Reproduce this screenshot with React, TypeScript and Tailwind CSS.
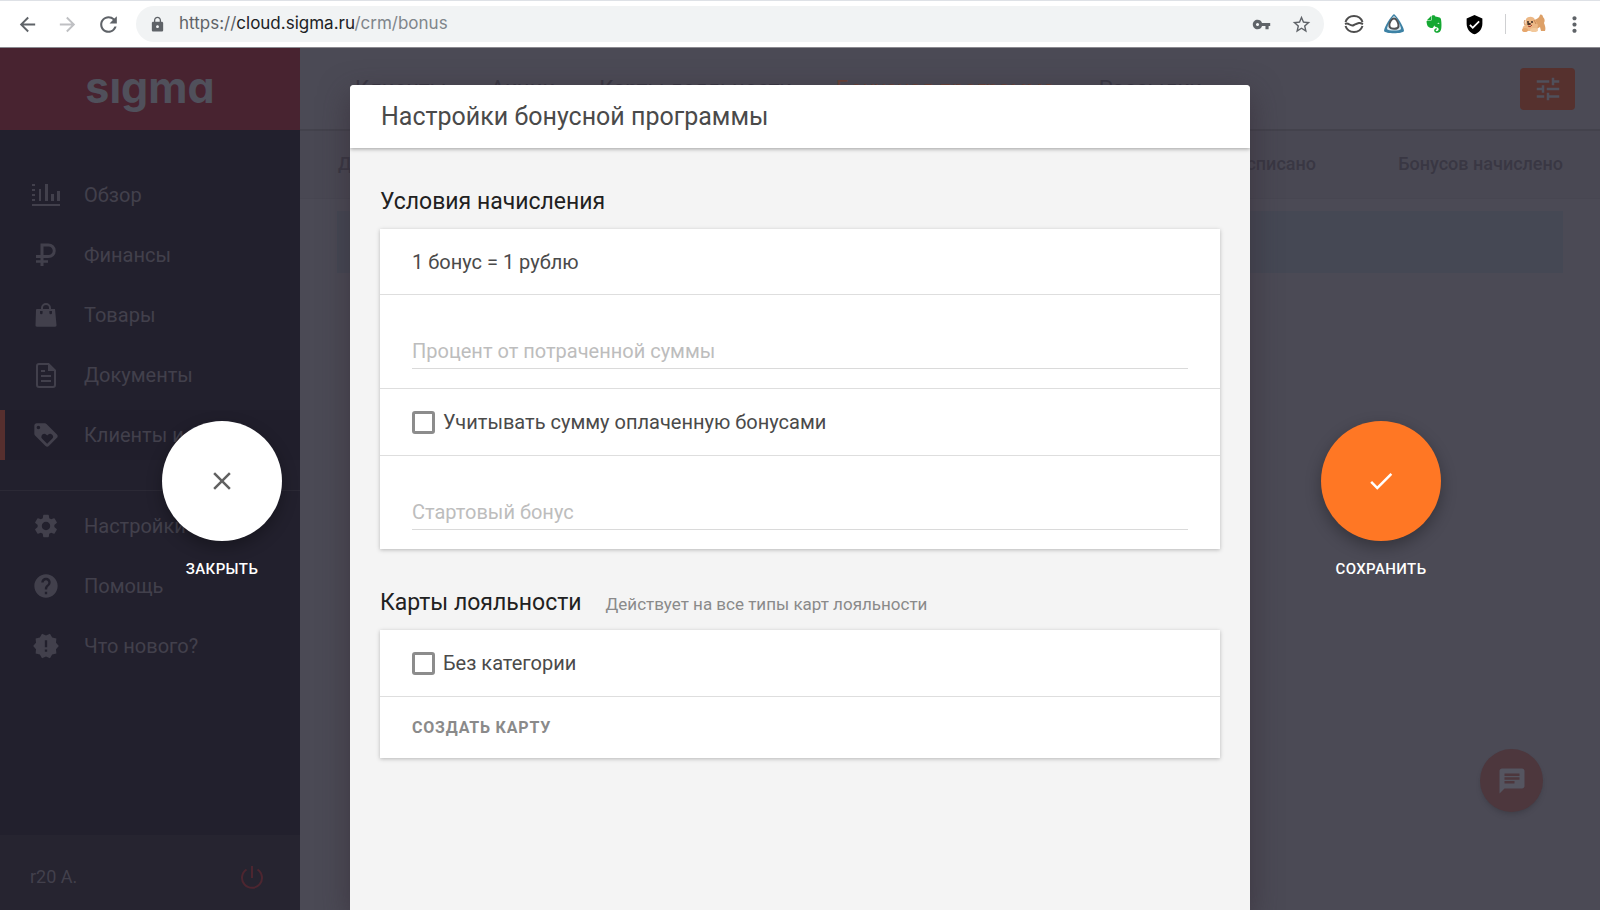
import { FC, ReactNode } from "react";
import { FaEvernote } from "react-icons/fa";
import {
    MdArrowBack,
    MdArrowForward,
    MdChat,
    MdCheck,
    MdClose,
    MdHelp,
    MdLock,
    MdLoyalty,
    MdMoreVert,
    MdNewReleases,
    MdRefresh,
    MdSettings,
    MdStarBorder,
    MdTune,
    MdVerifiedUser,
    MdVpnKey,
} from "react-icons/md";

const OverviewIcon: FC = () => (
    <svg width="28" height="24" viewBox="0 0 28 24" fill="currentColor">
        <path d="M0 21h28v2H0z" />
        <path d="M0 1h3v2H0zM0 6h3v2H0zM0 11h3v2H0zM0 16h3v2H0z" />
        <path d="M7 6h2v12H7zM13 1h3v17h-3zM19 11h3v7h-3zM25 8h3v10h-3z" />
    </svg>
);

const RubleIcon: FC = () => (
    <svg width="20" height="24" viewBox="0 0 20 24" fill="none" stroke="currentColor">
        <path d="M6 23V2h6.500a5.500 5.500 0 0 1 0 11.500H0" strokeWidth="3" />
        <path d="M0 18.500h12" strokeWidth="2.500" />
    </svg>
);

const BagIcon: FC = () => (
    <svg width="22" height="24" viewBox="0 0 22 24" fill="currentColor">
        <path d="M2 6h4V5a5 5 0 0 1 10 0v1h4l1.500 16a1.500 1.500 0 0 1-1.500 1.800H2A1.500 1.500 0 0 1 .5 22L1 7a1 1 0 0 1 1-1zm6 0h6V5a3 3 0 0 0-6 0zM5 8v2a1.300 1.300 0 0 0 2.600 0V8zm9.400 0v2a1.300 1.300 0 0 0 2.600 0V8z" fillRule="evenodd" />
    </svg>
);

const DocumentIcon: FC = () => (
    <svg width="20" height="25" viewBox="0 0 20 25" fill="none" stroke="currentColor" strokeWidth="2">
        <path d="M3 1h9.500L19 7.500V22a2 2 0 0 1-2 2H3a2 2 0 0 1-2-2V3a2 2 0 0 1 2-2z" />
        <path d="M12 1v7h7z" fill="currentColor" stroke="none" />
        <path d="M5 8h4M5 13h10M5 18h10" />
    </svg>
);

const PowerIcon: FC = () => (
    <svg width="24" height="24" viewBox="0 0 24 24" fill="none" stroke="currentColor" strokeWidth="2">
        <path d="M12 1v12" />
        <path d="M17.500 4.500a10 10 0 1 1-11 0" />
    </svg>
);

const PuppyIcon: FC = () => (
    <svg width="24" height="20" viewBox="0 0 24 20">
        <path d="M12 6c3-1 5-2 6-5 1-1 3 0 3 2 2 2 2 4 1 6 1 3 2 5 1 8h-4l-1-4-5 3z" fill="#dda067" />
        <path d="M4 5c2-3 8-3 9 1l3 5-1 6H5l-4-2c-1-2 1-3 2-4z" fill="#ecb886" />
        <ellipse cx="3" cy="16" rx="3" ry="2" fill="#e6a66c" />
        <ellipse cx="12" cy="16" rx="4" ry="2" fill="#f2c89b" />
        <path d="M3 6c-1 2-1 3 0 5M12 6l2 4" stroke="#c98550" fill="none" />
        <circle cx="6" cy="8" r="1" fill="#3b2a22" />
        <circle cx="10" cy="8" r="1" fill="#3b2a22" />
        <ellipse cx="7" cy="10" rx="2" ry="1" fill="#3b2a22" />
        <path d="M6 12q2 2 4-1" stroke="#a63b2c" fill="none" />
    </svg>
);

const BrowserBar: FC = () => (
    <div className="h-12 shrink-0 flex items-center pl-4 pr-[13px] bg-white text-[#5f6368] border-t border-t-[#dee1e6] border-b border-b-[#8b8a90]">
        <button type="button" aria-label="Назад" className="w-6">
            <MdArrowBack size={23} />
        </button>
        <button type="button" aria-label="Вперёд" className="ml-4 w-6 text-[#bfc0c3]">
            <MdArrowForward size={23} />
        </button>
        <button type="button" aria-label="Обновить" className="ml-4 w-6">
            <MdRefresh size={25} />
        </button>
        <div className="ml-4 flex-1 h-9 flex items-center rounded-full bg-[#f1f3f4] pl-3 pr-3">
            <MdLock size={17} className="mx-px" />
            <p className="ml-3 font-['Inter',sans-serif] text-[17px] text-[#80868b]">
                <span className="text-[#5f6368]">https://</span>
                <span className="text-[#202124]">cloud.sigma.ru</span>/crm/bonus
            </p>
            <button type="button" aria-label="Пароли" className="ml-auto">
                <MdVpnKey size={19} />
            </button>
            <button type="button" aria-label="В закладки" className="ml-5">
                <MdStarBorder size={21} />
            </button>
        </div>
        <div className="ml-5 flex items-center gap-5">
            <svg width="20" height="20" viewBox="0 0 20 20" fill="none" stroke="#4d4d4d" strokeWidth="2">
                <path d="M1.500 8A9 9 0 0 1 18.500 8M1.500 12a9 9 0 0 0 17 0" />
                <path d="M1 10c4-2 5 3 9 1s5-3 9-1" />
            </svg>
            <svg width="20" height="20" viewBox="0 0 20 20" fill="none">
                <path d="M10 0C13 2 20 13 20 17c-1 3-19 3-20 0C0 13 7 2 10 0z" fill="#3d82a5" />
                <path d="M10 2c2 1 7 10 7 13-1 2-13 2-14 0C3 12 8 3 10 2z" fill="#dceaf0" />
                <path d="M10 4.500c2.500 0 5 5 4.500 8s-8 3-9 0 2-8 4.500-8z" fill="#fff" stroke="#4f5154" strokeWidth="2" />
            </svg>
            <FaEvernote size={20} className="text-[#14a832]" />
            <MdVerifiedUser size={21} className="text-black" />
        </div>
        <div className="ml-5 h-5 w-px bg-[#cfd0d2]" />
        <div className="ml-4">
            <PuppyIcon />
        </div>
        <button type="button" aria-label="Меню" className="ml-4">
            <MdMoreVert size={25} />
        </button>
    </div>
);

interface NavItemProps {
    icon: ReactNode;
    label: string;
    active?: boolean;
}

const NavItem: FC<NavItemProps> = ({ icon, label, active }) => (
    <li>
        <a
            href="#"
            className={
                active
                    ? "flex items-center h-[50px] pl-[27px] bg-[#201e2b] border-l-[5px] border-[#562f2e]"
                    : "flex items-center h-[50px] pl-8"
            }
        >
            <span className="w-7 flex justify-center">{icon}</span>
            <span className="ml-6 whitespace-nowrap">{label}</span>
        </a>
    </li>
);

const Sidebar: FC = () => (
    <aside className="w-[300px] shrink-0 flex flex-col bg-[#22202d] text-[#42404c]">
        <div className="h-[82px] flex items-center justify-center bg-[#482330]">
            <span className="font-['Inter',sans-serif] font-bold text-[43px] leading-none pb-1 text-[#50505b] [font-feature-settings:'cv11']">
                sıgma
            </span>
        </div>
        <nav className="text-xl">
            <ul className="mt-10 flex flex-col gap-[10px]">
                <NavItem icon={<OverviewIcon />} label="Обзор" />
                <NavItem icon={<RubleIcon />} label="Финансы" />
                <NavItem icon={<BagIcon />} label="Товары" />
                <NavItem icon={<DocumentIcon />} label="Документы" />
                <NavItem icon={<MdLoyalty size={28} />} label="Клиенты и CRM" active />
            </ul>
            <hr className="mt-[30px] border-[#2b2935]" />
            <ul className="mt-[10px] flex flex-col gap-[10px]">
                <NavItem icon={<MdSettings size={30} />} label="Настройки" />
                <NavItem icon={<MdHelp size={30} />} label="Помощь" />
                <NavItem icon={<MdNewReleases size={28} />} label="Что нового?" />
            </ul>
        </nav>
        <div className="mt-auto h-[75px] flex items-center justify-between pl-[30px] pr-9 pt-2 bg-[#262430] text-lg">
            <span>r20 А.</span>
            <button type="button" aria-label="Выйти" className="text-[#4d2630]">
                <PowerIcon />
            </button>
        </div>
    </aside>
);

const Dashboard: FC = () => (
    <main className="flex-1 min-w-0 flex flex-col bg-[#4b4a55]">
        <header className="h-[83px] shrink-0 flex items-center justify-between pl-[55px] pr-[25px] border-b-2 border-[#43424c]">
            <nav className="flex gap-11 text-[22px] text-[#393743] whitespace-nowrap">
                <a href="#">Клиенты</a>
                <a href="#">Акции</a>
                <a href="#">Карты лояльности</a>
                <a href="#" className="text-[#6b4236]">Бонусная программа</a>
                <a href="#">Рассылки</a>
            </nav>
            <button
                type="button"
                aria-label="Фильтры"
                className="w-[55px] h-[42px] flex items-center justify-center rounded bg-[#56312e] text-[#50505b]"
            >
                <MdTune size={30} />
            </button>
        </header>
        <table className="w-full text-lg text-[#393743]">
            <thead className="bg-[#494853]">
                <tr className="h-[67px] border-b border-[#474651]">
                    <th className="pl-[38px] text-left font-medium">Дата</th>
                    <th className="text-right font-medium">Бонусов списано</th>
                    <th className="w-[284px] pr-[37px] text-right font-medium">Бонусов начислено</th>
                </tr>
            </thead>
        </table>
        <div className="mt-3 mx-[37px] h-[62px] shrink-0 bg-[#454854]" />
        <button
            type="button"
            aria-label="Чат"
            className="mt-auto ml-auto mr-[57px] mb-[98px] size-[63px] flex items-center justify-center rounded-full bg-[#4d373d] text-[#555560] shadow-md"
        >
            <MdChat size={30} />
        </button>
    </main>
);

const Card: FC<{ children: ReactNode }> = ({ children }) => (
    <div className="bg-white divide-y divide-[#dedede] shadow-[0_1px_4px_rgba(0,0,0,0.25)]">
        {children}
    </div>
);

const TextField: FC<{ label: string }> = ({ label }) => (
    <div className="px-8 pt-[38px] pb-[19px]">
        <input
            type="text"
            aria-label={label}
            placeholder={label}
            className="block w-full h-9 border-b border-[#dadada] text-xl text-[#4a4a4a] placeholder:text-[#bdbdbd] outline-none"
        />
    </div>
);

const CheckField: FC<{ label: string }> = ({ label }) => (
    <label className="h-[67px] px-8 flex items-center gap-2 text-xl text-[#4a4a4a]">
        <input
            type="checkbox"
            className="size-[23px] appearance-none rounded-[3px] border-[3px] border-[#8c8c8c] checked:bg-[#8c8c8c]"
        />
        {label}
    </label>
);

interface RoundActionProps {
    icon: ReactNode;
    label: string;
    className: string;
}

const RoundAction: FC<RoundActionProps> = ({ icon, label, className }) => (
    <button type="button" className="flex flex-col items-center gap-4 text-white">
        <span
            className={`size-[120px] flex items-center justify-center rounded-full shadow-[0_6px_16px_rgba(0,0,0,0.3)] ${className}`}
        >
            {icon}
        </span>
        <span className="text-[15px] font-medium leading-6 tracking-wide">{label}</span>
    </button>
);

const BonusSettings: FC = () => (
    <div
        role="dialog"
        aria-labelledby="bonus-title"
        className="mt-[37px] flex flex-col rounded-t-[4px] overflow-hidden bg-[#f4f4f4] shadow-[0_10px_30px_rgba(50,40,50,0.6)]"
    >
        <h1
            id="bonus-title"
            className="h-[63px] shrink-0 flex items-center px-[31px] bg-white text-[25px] text-[#4a4a4a] shadow-[0_1px_4px_rgba(0,0,0,0.35)]"
        >
            Настройки бонусной программы
        </h1>
        <div className="px-[30px] pt-[38px]">
            <h2 className="mb-[11px] text-[23px] leading-8 text-[#212121]">Условия начисления</h2>
            <Card>
                <p className="h-[66px] px-8 flex items-center text-xl text-[#4a4a4a]">
                    1 бонус = 1 рублю
                </p>
                <TextField label="Процент от потраченной суммы" />
                <CheckField label="Учитывать сумму оплаченную бонусами" />
                <TextField label="Стартовый бонус" />
            </Card>
            <div className="mt-[38px] mb-[11px] flex items-baseline gap-6">
                <h2 className="text-[23px] leading-8 text-[#212121]">Карты лояльности</h2>
                <span className="text-[17px] text-[#8a8a8a]">Действует на все типы карт лояльности</span>
            </div>
            <Card>
                <CheckField label="Без категории" />
                <div className="h-[61px] px-8 flex items-center">
                    <button type="button" className="text-base font-bold tracking-wider text-[#8a8a8a]">
                        СОЗДАТЬ КАРТУ
                    </button>
                </div>
            </Card>
        </div>
    </div>
);

export default function App() {
    return (
        <div className="h-screen flex flex-col overflow-hidden font-['Roboto',sans-serif]">
            <BrowserBar />
            <div className="relative flex-1 min-h-0 flex">
                <Sidebar />
                <Dashboard />
                <div className="absolute inset-0 grid grid-cols-[1fr_900px_1fr]">
                    <div className="flex items-center justify-end pr-[68px] pt-11">
                        <RoundAction
                            icon={<MdClose size={30} />}
                            label="ЗАКРЫТЬ"
                            className="bg-white text-[#616161]"
                        />
                    </div>
                    <BonusSettings />
                    <div className="flex items-center pl-[71px] pt-11">
                        <RoundAction
                            icon={<MdCheck size={30} />}
                            label="СОХРАНИТЬ"
                            className="bg-[#ff7724]"
                        />
                    </div>
                </div>
            </div>
        </div>
    );
}
